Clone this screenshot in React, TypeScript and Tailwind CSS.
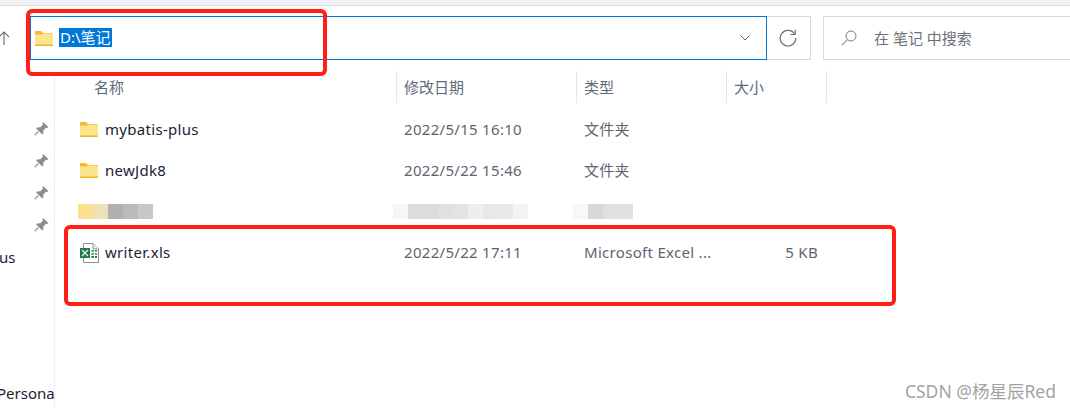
import React from "react";

const font = { fontFamily: '"Noto Sans", "Noto Sans CJK SC", sans-serif' };

function Folder({ className }: { className: string }) {
  return (
    <svg viewBox="0 0 18 15" className={className}>
      <path d="M0 1.2C0 .5.4 0 1 0h5l2 2h9.4c.3 0 .6.3.6.6V14c0 .6-.4 1-1 1H1c-.6 0-1-.4-1-1z" fill="#f7b92b" />
      <path d="M0 3.6h6.6L8.6 2.6H18V14c0 .6-.4 1-1 1H1c-.6 0-1-.4-1-1z" fill="#fde48f" />
      <path d="M0 13.4h18V14c0 .6-.4 1-1 1H1c-.6 0-1-.4-1-1z" fill="#f0b429" />
    </svg>
  );
}

function Pin() {
  return (
    <svg viewBox="0 0 14 14" className="w-[15px] h-[15px]">
      <path d="M8.4.6l5 5-1.3 1-.9-.3-2.6 2.7.2 2.4-1.1 1.1-5.6-5.6 1.1-1.1 2.4.2 2.7-2.6-.3-.9z" fill="#8b8d90" />
      <path d="M4 9.8L.6 13.4" stroke="#a5a7a9" strokeWidth="1.4" />
    </svg>
  );
}

function Xls() {
  return (
    <svg viewBox="0 0 19 20" className="w-[19px] h-[20px] shrink-0">
      <path d="M3.5.5h9.5l5.5 5.5v13.5h-15z" fill="#fff" stroke="#8f8f8f" />
      <path d="M13 .5v5.5h5.5" fill="#f0f0f0" stroke="#8f8f8f" />
      <rect x="0" y="5" width="10" height="10" fill="#1f7a45" />
      <path d="M2 7l6 6M8 7l-6 6" stroke="#e8f5ec" strokeWidth="1.3" />
      <path d="M11.5 7h2.4v1.8h-2.4zM15 7h2v1.8h-2zM11.5 10h2.4v1.8h-2.4zM15 10h2v1.8h-2z" fill="#2f9e63" />
      <path d="M11.5 13h2.4v1.8h-2.4zM15 13h2v1.8h-2z" fill="#1f5f3d" />
    </svg>
  );
}

function Row({ name, date, type, size, icon }: { name: string; date: string; type: string; size?: string; icon: React.ReactNode }) {
  return (
    <div className="grid grid-cols-[342px_180px_150px_100px] h-[41px] items-center text-[15px] tracking-[0.3px] text-[#5d6470]">
      <div className="flex items-center pl-[25px] text-[#1a2433]">
        <span className="w-[25px] flex items-center">{icon}</span>
        {name}
      </div>
      <div className="pl-[7px]">{date}</div>
      <div className="pl-[7px] whitespace-nowrap">{type}</div>
      <div className="pr-[9px] text-right">{size}</div>
    </div>
  );
}

function Blocks({ colors }: { colors: string[] }) {
  return (
    <div className="flex h-[15px]">
      {colors.map((c, i) => (
        <div key={i} className="w-[15px]" style={{ backgroundColor: c }} />
      ))}
    </div>
  );
}

export default function App() {
  return (
    <div className="relative w-[1070px] h-[408px] overflow-hidden bg-white" style={font}>
      <div className="h-[6px] bg-[#eff3f8] border-b border-[#dcdcdc]" />

      <div className="flex items-stretch h-[44px] mt-[10px]">
        <div className="w-[30px] flex items-center overflow-hidden">
          <svg viewBox="0 0 12 14" className="w-[12px] h-[14px] -ml-[2px]">
            <path d="M6 14V1M.8 6.2L6 1l5.2 5.2" fill="none" stroke="#6b6b6b" strokeWidth="1.1" />
          </svg>
        </div>
        <div className="w-[737px] flex items-center border border-[#0078d7] pl-[4px] pr-[16px]">
          <Folder className="w-[18px] h-[15px] shrink-0" />
          <span className="ml-[6px] mb-px bg-[#0078d7] text-white text-[15px] leading-[19px] px-px">D:\笔记</span>
          <svg viewBox="0 0 10 6" className="w-[10px] h-[6px] ml-auto">
            <path d="M.5.5L5 5 9.5.5" fill="none" stroke="#5f5f5f" strokeWidth="1" />
          </svg>
        </div>
        <div className="w-[44px] flex items-center justify-center pr-[2px] border border-l-0 border-[#d9d9d9]">
          <svg viewBox="0 0 18 18" className="w-[18px] h-[18px]">
            <path d="M15.6 5A7.8 7.8 0 1 0 16.8 9" fill="none" stroke="#6f6f6f" strokeWidth="1.2" />
            <path d="M16.2 .8v4.7h-4.7" fill="none" stroke="#6f6f6f" strokeWidth="1.2" />
          </svg>
        </div>
        <div className="flex-1 ml-[12px] flex items-center border border-r-0 border-[#d9d9d9] pl-[17px] text-[15px] text-[#6b7078]">
          <svg viewBox="0 0 16 16" className="w-[16px] h-[16px]">
            <circle cx="10" cy="6" r="5" fill="none" stroke="#7d7d7d" strokeWidth="1" />
            <path d="M6.4 9.6L.8 15.2" stroke="#b58d68" strokeWidth="1.2" />
          </svg>
          <span className="ml-[17px]">在 笔记 中搜索</span>
        </div>
      </div>

      <div className="flex h-[337px] mt-[11px]">
        <div className="w-[55px] shrink-0 border-r border-[#eeeeee] flex flex-col overflow-hidden text-[15px] text-[#1a2433]">
          <div className="flex flex-col items-end pr-[5px] pt-[50px] gap-[17px]">
            <Pin />
            <Pin />
            <Pin />
            <Pin />
          </div>
          <div className="mt-[15px] -ml-[14px] leading-[20px]">plus</div>
          <div className="mt-[116px] -ml-[3px] leading-[20px] whitespace-nowrap">Personal</div>
        </div>

        <div className="flex-1">
          <div className="grid grid-cols-[342px_180px_150px_100px] h-[32px] text-[15px] text-[#5d6a7a]">
            <div className="pl-[39px] flex items-center border-r border-[#e5e5e5]">名称</div>
            <div className="pl-[7px] flex items-center border-r border-[#e5e5e5]">修改日期</div>
            <div className="pl-[7px] flex items-center border-r border-[#e5e5e5]">类型</div>
            <div className="pl-[7px] flex items-center border-r border-[#e5e5e5]">大小</div>
          </div>
          <div className="pt-[6px]">
            <Row name="mybatis-plus" date="2022/5/15 16:10" type="文件夹" icon={<Folder className="w-[18px] h-[15px]" />} />
            <Row name="newJdk8" date="2022/5/22 15:46" type="文件夹" icon={<Folder className="w-[18px] h-[15px]" />} />
            <div className="grid grid-cols-[338px_180px_150px] h-[41px] items-center">
              <div className="pl-[23px]"><Blocks colors={["#fde08f", "#eee0b8", "#b0b0ae", "#bbbbb8", "#c5c8cb"]} /></div>
              <div><Blocks colors={["#f7f6f5", "#dcdedc", "#dddcd9", "#e0e1df", "#e1e3e5", "#eeeeee", "#e8e8e6", "#e9e9e8", "#f3f3f3"]} /></div>
              <div><Blocks colors={["#f9f8f7", "#d8d8d8", "#e0e0dd", "#dfe0e2"]} /></div>
            </div>
            <Row name="writer.xls" date="2022/5/22 17:11" type="Microsoft Excel ..." size="5 KB" icon={<Xls />} />
          </div>
        </div>
      </div>

      <div className="absolute left-[26px] top-[9px] w-[301px] h-[67px] border-[4px] border-[#ff1f14] rounded-[6px]" />
      <div className="absolute left-[64px] top-[225px] w-[832px] h-[81px] border-[4px] border-[#ff1f14] rounded-[6px]" />
      <div className="absolute right-[14px] bottom-[7px] text-[17.5px] leading-[20px] text-[#a3a3a3]">CSDN @杨星辰Red</div>
    </div>
  );
}
